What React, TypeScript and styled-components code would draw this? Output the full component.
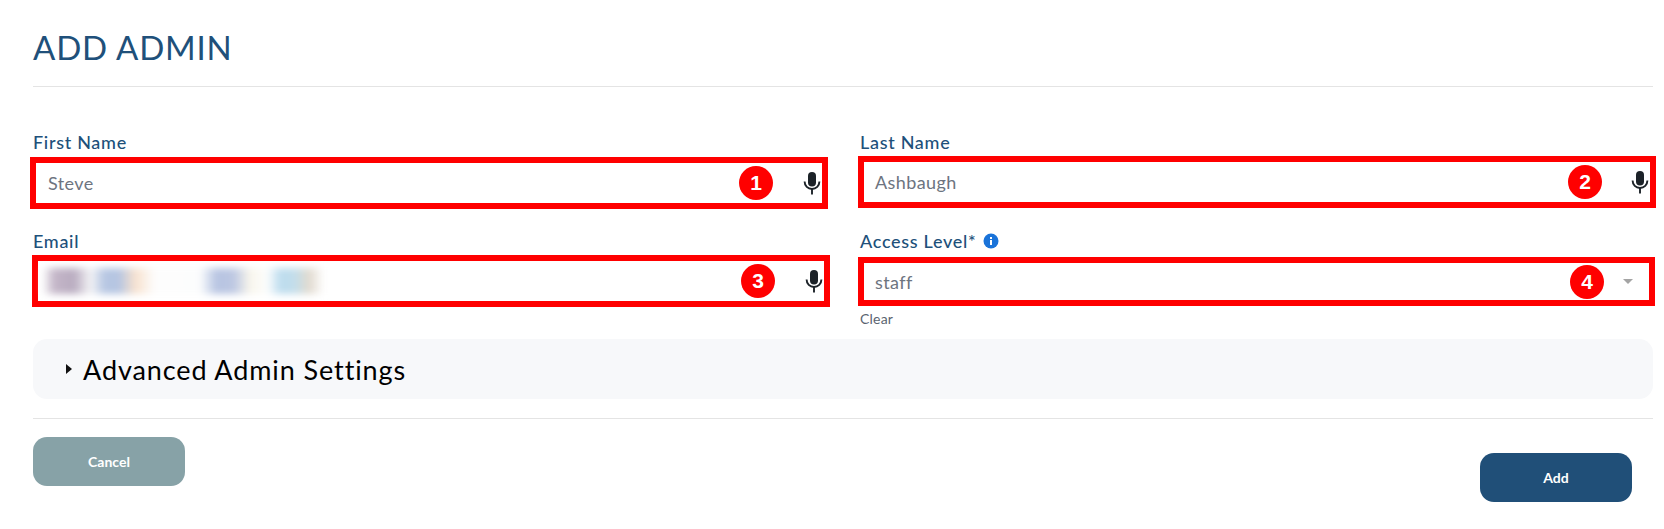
import React from 'react';
import styled, { createGlobalStyle } from 'styled-components';

const GlobalStyle = createGlobalStyle`
  html, body {
    margin: 0;
    background: #fff;
  }
  body {
    font-family: "Lato", "Noto Sans", sans-serif;
  }
`;

const Page = styled.div`
  width: 1664px;
  height: 529px;
  box-sizing: border-box;
  padding: 0 11px 0 33px;
  overflow: hidden;
`;

const Header = styled.div`
  height: 87px;
  box-sizing: border-box;
  padding-top: 26px;
  border-bottom: 1px solid #e4e4e4;
`;

const Title = styled.h1`
  margin: 0;
  font-size: 33px;
  line-height: 42px;
  font-weight: 400;
  letter-spacing: 0.8px;
  color: #20507a;
`;

const FormGrid = styled.div`
  display: grid;
  grid-template-columns: 795px 795px;
  column-gap: 32px;
  margin-top: 45px;
`;

const Field = styled.div<{ $height: number }>`
  height: ${(p) => p.$height}px;
`;

const Label = styled.label`
  display: flex;
  align-items: center;
  gap: 7px;
  height: 20px;
  font-size: 18px;
  font-weight: 500;
  letter-spacing: 0.7px;
  color: #20507a;
`;

const InputBox = styled.div<{ $left: number; $right: number; $top: number; $height: number }>`
  position: relative;
  display: flex;
  align-items: center;
  box-sizing: border-box;
  height: ${(p) => p.$height}px;
  margin: ${(p) => p.$top}px ${(p) => p.$right}px 0 ${(p) => p.$left}px;
  padding: 0 1px 0 ${(p) => 10 - p.$left - 6}px;
  border: 6.5px solid #ff0000;
  background: #fff;
`;

const Value = styled.span`
  flex: 1;
  padding-left: 5px;
  font-size: 18px;
  letter-spacing: 0.4px;
  color: #6d7480;
`;

const BlurredEmail = styled.div`
  width: 280px;
  height: 26px;
  flex: none;
  background: linear-gradient(
    90deg,
    #fbfbfb 0,
    #c4b6c8 4%,
    #b9acc0 11%,
    #f4f4f6 17%,
    #b6c6e2 22%,
    #b5c5e2 27%,
    #f8e2cf 33%,
    #fdfdfd 40%,
    #fcfdfd 56%,
    #b7c4e2 62%,
    #bcc7e2 68%,
    #f9f6ec 74%,
    #fcfdfd 80%,
    #bcdcee 85%,
    #c3deeb 90%,
    #e2dace 95%,
    #fcfcfc 100%
  );
  filter: blur(3.5px);
`;

const Spacer = styled.div`
  flex: 1;
`;

const Badge = styled.span<{ $right: number }>`
  position: absolute;
  top: 50%;
  right: ${(p) => p.$right}px;
  width: 34px;
  height: 34px;
  margin-top: -17px;
  display: flex;
  align-items: center;
  justify-content: center;
  border-radius: 50%;
  background: #ff0000;
  font-family: "Liberation Sans", Arial, sans-serif;
  font-size: 21px;
  font-weight: 700;
  color: #fff;
`;

const MicIcon = styled.svg`
  flex: none;
  width: 18px;
  height: 24px;
`;

const Caret = styled.span`
  flex: none;
  width: 0;
  height: 0;
  margin-right: 15px;
  border-left: 5px solid transparent;
  border-right: 5px solid transparent;
  border-top: 5px solid #a4a4a4;
`;

const InfoIcon = styled.svg`
  width: 16px;
  height: 16px;
  flex: none;
`;

const ClearLink = styled.a`
  display: block;
  margin-top: 5px;
  font-size: 14px;
  line-height: 16px;
  letter-spacing: 0.2px;
  color: #5b6470;
`;

const AdvancedPanel = styled.div`
  display: flex;
  align-items: center;
  gap: 11px;
  height: 60px;
  box-sizing: border-box;
  padding-left: 33px;
  border-radius: 14px;
  background: #f7f8fa;
`;

const Triangle = styled.span`
  width: 0;
  height: 0;
  border-top: 5px solid transparent;
  border-bottom: 5px solid transparent;
  border-left: 6px solid #111;
`;

const AdvancedText = styled.span`
  font-size: 27px;
  font-weight: 400;
  letter-spacing: 0.9px;
  color: #000;
`;

const Footer = styled.div`
  display: flex;
  justify-content: space-between;
  margin-top: 19px;
  padding: 18px 21px 0 0;
  border-top: 1px solid #e4e4e4;
`;

const Button = styled.button<{ $bg: string; $offset: number }>`
  width: 152px;
  height: 49px;
  margin-top: ${(p) => p.$offset}px;
  border: 0;
  border-radius: 14px;
  background: ${(p) => p.$bg};
  font-family: inherit;
  font-size: 14px;
  font-weight: 700;
  color: #fff;
`;

const Mic = () => (
  <MicIcon viewBox="0 0 18 24">
    <rect x="5" y="1" width="8" height="14.5" rx="4" fill="#1c2228" />
    <path d="M1.6 10.5c0 4.4 3.3 7.5 7.4 7.5s7.4-3.1 7.4-7.5" fill="none" stroke="#1c2228" strokeWidth="1.9" />
    <path d="M9 18v5.5" stroke="#1c2228" strokeWidth="1.9" />
  </MicIcon>
);

const Info = () => (
  <InfoIcon viewBox="0 0 16 16">
    <circle cx="8" cy="8" r="7.5" fill="#1a73d9" />
    <rect x="7" y="7" width="2" height="5" fill="#fff" />
    <rect x="7" y="4" width="2" height="2" fill="#fff" />
  </InfoIcon>
);

export default function App() {
  return (
    <Page>
      <GlobalStyle />
      <Header>
        <Title>ADD ADMIN</Title>
      </Header>
      <FormGrid>
        <Field $height={99}>
          <Label>First Name</Label>
          <InputBox $left={-3} $right={0} $top={5} $height={52}>
            <Value>Steve</Value>
            <Badge $right={49}>1</Badge>
            <Mic />
          </InputBox>
        </Field>
        <Field $height={99}>
          <Label>Last Name</Label>
          <InputBox $left={-2} $right={-1} $top={4} $height={52}>
            <Value>Ashbaugh</Value>
            <Badge $right={48}>2</Badge>
            <Mic />
          </InputBox>
        </Field>
        <Field $height={108}>
          <Label>Email</Label>
          <InputBox $left={-1} $right={-2} $top={4} $height={52}>
            <BlurredEmail />
            <Spacer />
            <Badge $right={49}>3</Badge>
            <Mic />
          </InputBox>
        </Field>
        <Field $height={108}>
          <Label>
            Access Level*
            <Info />
          </Label>
          <InputBox $left={-2} $right={0} $top={6} $height={49}>
            <Value>staff</Value>
            <Badge $right={45}>4</Badge>
            <Caret />
          </InputBox>
          <ClearLink>Clear</ClearLink>
        </Field>
      </FormGrid>
      <AdvancedPanel>
        <Triangle />
        <AdvancedText>Advanced Admin Settings</AdvancedText>
      </AdvancedPanel>
      <Footer>
        <Button $bg="#87a2a7" $offset={0}>Cancel</Button>
        <Button $bg="#204f78" $offset={16}>Add</Button>
      </Footer>
    </Page>
  );
}
